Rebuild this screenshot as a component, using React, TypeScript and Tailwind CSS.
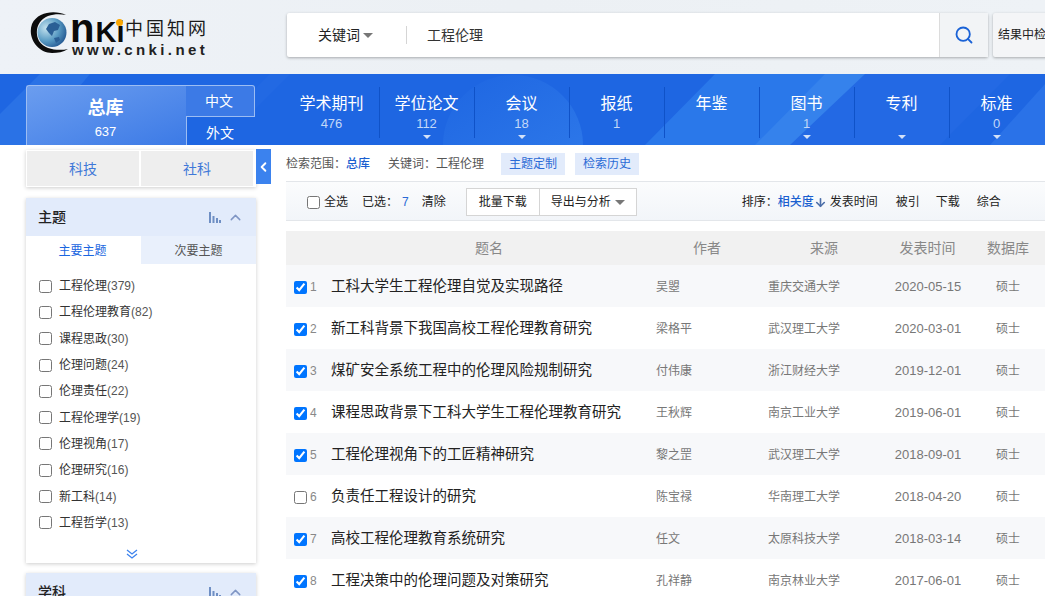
import { ArrowDown, ChevronLeft, ChevronUp, Search } from "lucide-react";

const navs = [
  { name: "学术期刊", count: "476", arrow: false },
  { name: "学位论文", count: "112", arrow: true },
  { name: "会议", count: "18", arrow: true },
  { name: "报纸", count: "1", arrow: false },
  { name: "年鉴", count: "", arrow: false },
  { name: "图书", count: "1", arrow: true },
  { name: "专利", count: "", arrow: true },
  { name: "标准", count: "0", arrow: true },
];

const topics = [
  ["工程伦理", "379"],
  ["工程伦理教育", "82"],
  ["课程思政", "30"],
  ["伦理问题", "24"],
  ["伦理责任", "22"],
  ["工程伦理学", "19"],
  ["伦理视角", "17"],
  ["伦理研究", "16"],
  ["新工科", "14"],
  ["工程哲学", "13"],
];

const rows = [
  { title: "工科大学生工程伦理自觉及实现路径", author: "吴曌", source: "重庆交通大学", date: "2020-05-15", checked: true },
  { title: "新工科背景下我国高校工程伦理教育研究", author: "梁格平", source: "武汉理工大学", date: "2020-03-01", checked: true },
  { title: "煤矿安全系统工程中的伦理风险规制研究", author: "付伟康", source: "浙江财经大学", date: "2019-12-01", checked: true },
  { title: "课程思政背景下工科大学生工程伦理教育研究", author: "王秋辉", source: "南京工业大学", date: "2019-06-01", checked: true },
  { title: "工程伦理视角下的工匠精神研究", author: "黎之罡", source: "武汉理工大学", date: "2018-09-01", checked: true },
  { title: "负责任工程设计的研究", author: "陈宝禄", source: "华南理工大学", date: "2018-04-20", checked: false },
  { title: "高校工程伦理教育系统研究", author: "任文", source: "太原科技大学", date: "2018-03-14", checked: true },
  { title: "工程决策中的伦理问题及对策研究", author: "孔祥静", source: "南京林业大学", date: "2017-06-01", checked: true },
];

function Caret({ className }: { className: string }) {
  return <span className={`inline-block border-x-[5px] border-t-[5px] border-x-transparent ${className}`} />;
}

function Bars() {
  return (
    <svg width="12" height="11" viewBox="0 0 12 11" fill="#6f8fc4">
      <rect x="0" y="0" width="2" height="11" />
      <rect x="3.5" y="4" width="2" height="7" />
      <rect x="7" y="6" width="2" height="5" />
      <rect x="10" y="8" width="2" height="3" />
    </svg>
  );
}

function Logo() {
  return (
    <div className="relative h-[44px] w-[178px] shrink-0">
      <svg className="absolute left-0 top-0" width="44" height="44" viewBox="0 0 44 44">
        <defs>
          <radialGradient id="globe" cx="30%" cy="35%" r="80%">
            <stop offset="0%" stopColor="#c4e2ee" />
            <stop offset="55%" stopColor="#5a9cc4" />
            <stop offset="100%" stopColor="#1c4f8c" />
          </radialGradient>
        </defs>
        <circle cx="22" cy="20.500" r="14.500" fill="url(#globe)" />
        <path d="M19 12l6-2 5 3-2 5-4 1-2 5-3-3-3-4z" fill="#2a5f95" />
        <path d="M24 26l5-1 1 3-4 3z" fill="#2a5f95" />
        <path d="M36 3C26-2 8-1 2 12c-5 14 6 29 20 29 6 0 11-1 16-4-9 2-23 1-29-8C4 19 8 8 18 4c6-2 12-2 18-1z" fill="#0c0c0c" />
      </svg>
      <span className="absolute left-[40px] top-[1px] whitespace-nowrap font-['Liberation_Sans',sans-serif] text-[29px] font-bold leading-[30px] text-[#0a0a0a]">
        <span className="text-[40px] leading-[30px]">n</span>
        <span className="ml-px">Ki</span>
      </span>
      <span className="absolute left-[86px] top-[7px] h-[7px] w-[7px] rounded-full bg-[#f9a602]" />
      <span className="absolute left-[95px] top-[5px] whitespace-nowrap text-[18px] leading-[24px] tracking-[3px] text-[#1a1a1a]">中国知网</span>
      <span className="absolute left-[42px] top-[34px] whitespace-nowrap font-['Liberation_Sans',sans-serif] text-[15px] font-bold leading-[8px] tracking-[3.4px] text-[#222]">
        www.cnki.net
      </span>
    </div>
  );
}

export default function App() {
  return (
    <div className="h-[596px] w-[1045px] overflow-hidden bg-white font-['Liberation_Sans','Noto_Sans_CJK_SC',sans-serif] text-[12px] text-[#333]">
      {/* header */}
      <header className="flex h-[74px] bg-gradient-to-r from-[#eef2f7] via-[#ecf0f4] to-[#eef2f6] pl-[30px] pt-[12px]">
        <Logo />
        <div className="ml-[79px] mt-px flex h-[44px] w-[701px] shrink-0 rounded-[2px] bg-white shadow-[0_1px_3px_rgba(0,0,0,0.3)]">
          <div className="flex w-[119px] items-center justify-center gap-[3px] pr-[2px] text-[14px] text-[#222]">
            关键词
            <Caret className="border-t-[#777]" />
          </div>
          <div className="my-[13px] w-px bg-[#d5d5d5]" />
          <div className="flex flex-1 items-center pl-[20px] text-[14px] text-[#333]">工程伦理</div>
          <button className="flex w-[49px] items-center justify-center border-l border-[#dcdcdc] bg-[#f2f4f6]">
            <Search size={20} strokeWidth={2.2} className="text-[#1a62d6]" />
          </button>
        </div>
        <div className="ml-[5px] mt-px flex h-[44px] w-[100px] shrink-0 items-center rounded-[2px] bg-[#f4f5f7] pl-[5px] text-[12px] whitespace-nowrap text-[#222] shadow-[0_1px_3px_rgba(0,0,0,0.3)]">
          结果中检索
        </div>
      </header>

      {/* database nav */}
      <nav className="relative flex h-[71px] overflow-hidden bg-[#1e66e2] pl-[26px] pt-[11px]">
        <svg className="absolute left-0 top-0" width="1045" height="71" viewBox="0 0 1045 71">
          <defs>
            <linearGradient id="disc" x1="0" y1="0" x2="0.6" y2="1">
              <stop offset="0%" stopColor="#1e66e2" />
              <stop offset="100%" stopColor="#2f7aea" />
            </linearGradient>
          </defs>
          <circle cx="513" cy="71" r="70" fill="url(#disc)" />
          <polygon points="645,71 715,0 865,0 790,71" fill="#2a78ea" />
          <polygon points="755,71 825,0 880,0 805,71" fill="#3582ec" />
          <polygon points="790,71 865,0 1010,0 940,71" fill="#2369e4" />
          <polygon points="990,71 1045,10 1045,71" fill="#2a72e8" />
          <polygon points="0,40 40,0 90,0 30,71 0,71" fill="#2a72e6" />
          <polygon points="230,40 270,0 290,0 240,50" fill="#2269e3" />
        </svg>
        <div className="relative flex h-[60px] w-[229px] shrink-0">
          <div className="flex w-[160px] flex-col items-center rounded-tl-[3px] border-l border-t border-[#9cbdf3] bg-gradient-to-br from-[#6b9def] to-[#3c7ae6] pr-[2px] pt-[9px] text-white">
            <span className="text-[18px] font-bold leading-[26px]">总库</span>
            <span className="mt-[3px] text-[13px] leading-[16px]">637</span>
          </div>
          <div className="flex w-[69px] flex-col">
            <div className="flex h-[32px] items-center justify-center rounded-tr-[3px] border-y border-r border-[#9cbdf3] bg-[#3c7ae6] pr-[2px] text-[14px] text-white">中文</div>
            <div className="flex h-[28px] items-center justify-center border-l border-[#9cbdf3] bg-[#1e66e2] pr-[2px] pt-[5px] text-[14px] text-white">外文</div>
          </div>
        </div>
        <div className="relative ml-[29px] flex">
          {navs.map((n, i) => (
            <div key={n.name} className="relative flex h-[60px] w-[95px] shrink-0 flex-col items-center text-white">
              {i > 0 && <span className="absolute left-0 top-[2px] h-[51px] w-px bg-[#0f52c8]" />}
              <span className="mt-[7px] text-[16px] leading-[24px]">{n.name}</span>
              <span className="text-[13px] leading-[16px] text-[#c3d8f8]">{n.count}</span>
              {n.arrow && <span className="absolute bottom-[6px] border-x-[4px] border-t-[4px] border-x-transparent border-t-[#d3e1f8]" />}
            </div>
          ))}
        </div>
      </nav>

      <div className="flex">
        {/* sidebar */}
        <aside className="relative ml-[26px] w-[230px] shrink-0">
          <div className="mt-[5px] flex h-[37px] gap-[2px] bg-white py-px pl-px pr-[3px] shadow-[0_1px_4px_rgba(0,0,0,0.2)]">
            <div className="flex flex-1 items-center justify-center bg-[#eeeeee] pt-[2px] text-[14px] text-[#3f78d8]">科技</div>
            <div className="flex flex-1 items-center justify-center bg-[#eeeeee] pt-[2px] text-[14px] text-[#3f78d8]">社科</div>
          </div>
          <button className="absolute left-[230px] top-[4px] flex h-[35px] w-[15px] items-center justify-center bg-[#3b82ee]">
            <ChevronLeft size={16} strokeWidth={3} className="text-white" />
          </button>

          <section className="mt-[11px] h-[365px] bg-white shadow-[0_1px_4px_rgba(0,0,0,0.2)]">
            <div className="flex h-[38px] items-center bg-[#e2ebfb] pl-[12px] pr-[12px]">
              <span className="flex-1 text-[14px] font-medium text-[#222]">主题</span>
              <Bars />
              <ChevronUp size={17} strokeWidth={2} className="ml-[6px] text-[#7f95c4]" />
            </div>
            <div className="flex h-[28px] text-[12px]">
              <div className="flex w-[115px] items-center justify-center pr-[2px] pt-[2px] text-[#1a66e0]">主要主题</div>
              <div className="flex flex-1 items-center justify-center bg-[#e9f0fc] pt-[2px] text-[#555]">次要主题</div>
            </div>
            <ul className="mt-[9px]">
              {topics.map(([name, n]) => (
                <li key={name} className="flex h-[26.3px] items-center pl-[13px]">
                  <input type="checkbox" readOnly className="m-0 h-[13px] w-[13px]" />
                  <span className="ml-[7px] text-[12px] text-[#333]">
                    {name}
                    <span className="text-[#555]">({n})</span>
                  </span>
                </li>
              ))}
            </ul>
            <div className="mt-[13px] flex pl-[100px]">
              <svg width="12" height="10" viewBox="0 0 12 10" fill="none" stroke="#3b82ee" strokeWidth="1.300">
                <path d="M1 1l5 4 5-4" />
                <path d="M1 5l5 4 5-4" />
              </svg>
            </div>
          </section>

          <section className="mt-[10px] bg-white shadow-[0_1px_4px_rgba(0,0,0,0.2)]">
            <div className="flex h-[38px] items-center bg-[#e2ebfb] pl-[12px] pr-[12px]">
              <span className="flex-1 text-[14px] font-medium text-[#222]">学科</span>
              <Bars />
              <ChevronUp size={17} strokeWidth={2} className="ml-[6px] text-[#7f95c4]" />
            </div>
          </section>
        </aside>

        {/* results */}
        <main className="ml-[30px] w-[766px] shrink-0">
          <div className="mt-[8px] flex h-[22px] items-center text-[12px] text-[#555]">
            <span>检索范围：</span>
            <span className="font-medium text-[#1a5fd0]">总库</span>
            <span className="ml-[18px]">关键词：工程伦理</span>
            <span className="ml-[17px] flex h-[22px] w-[64px] items-center justify-center bg-[#e2ebfb] text-[#2a6ad6]">主题定制</span>
            <span className="ml-[10px] flex h-[22px] w-[64px] items-center justify-center bg-[#e2ebfb] text-[#2a6ad6]">检索历史</span>
          </div>
          <div className="mt-[6px] flex h-[40px] items-center border-y border-[#e3e6ea] bg-gradient-to-b from-[#fbfcfd] to-[#f2f5f9] pl-[21px] pt-[2px] text-[12px] text-[#222]">
            <input type="checkbox" readOnly className="m-0 h-[13px] w-[13px]" />
            <span className="ml-[4px]">全选</span>
            <span className="ml-[14px]">已选：</span>
            <span className="ml-[4px] text-[#2a6ad6]">7</span>
            <span className="ml-[13px]">清除</span>
            <button className="ml-[20px] h-[28px] w-[74px] border border-[#d5d5d5] bg-white">批量下载</button>
            <button className="flex h-[28px] w-[97px] items-center justify-center gap-[4px] border border-l-0 border-[#d5d5d5] bg-white">
              导出与分析
              <Caret className="border-t-[#777]" />
            </button>
            <span className="ml-[105px]">排序：</span>
            <span className="font-medium text-[#1a5fd0]">相关度</span>
            <ArrowDown size={13} strokeWidth={3} className="text-[#4a6da8]" />
            <span className="ml-[3px]">发表时间</span>
            <span className="ml-[18px]">被引</span>
            <span className="ml-[16px]">下载</span>
            <span className="ml-[17px]">综合</span>
          </div>
          <div className="mt-[10px] grid h-[34px] grid-cols-[406px_64px_136px_71px_90px] items-center bg-[#f1f1f1] text-[14px] text-[#888]">
            <span className="text-center">题名</span>
            <span className="pl-px">作者</span>
            <span className="text-center">来源</span>
            <span className="whitespace-nowrap text-center">发表时间</span>
            <span className="text-center">数据库</span>
          </div>
          {rows.map((r, i) => (
            <div key={r.title} className={`grid h-[42px] grid-cols-[45px_325px_112px_110px_100px_74px] items-center pt-[2px] ${i % 2 === 0 ? "bg-[#f7f8fa]" : "bg-white"}`}>
              <span className="flex items-center pl-[8px] text-[12px] text-[#888]">
                <input type="checkbox" readOnly checked={r.checked} className="m-0 h-[13px] w-[13px]" />
                <span className="ml-[3px]">{i + 1}</span>
              </span>
              <span className="text-[14.5px] text-[#222]">{r.title}</span>
              <span className="text-[12px] text-[#777]">{r.author}</span>
              <span className="text-[12px] text-[#777]">{r.source}</span>
              <span className="text-center text-[13px] text-[#777]">{r.date}</span>
              <span className="pr-[14px] text-center text-[12px] text-[#777]">硕士</span>
            </div>
          ))}
        </main>
      </div>
    </div>
  );
}
